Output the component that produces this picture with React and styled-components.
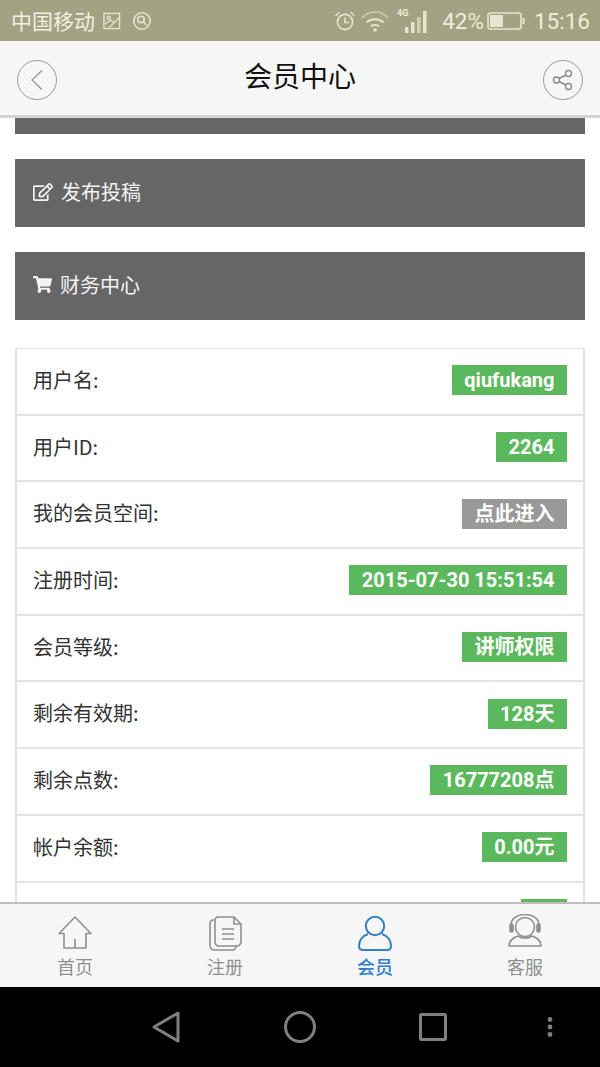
import React from "react";
import styled, { createGlobalStyle } from "styled-components";
import { FaRegEdit, FaShoppingCart } from "react-icons/fa";

const Global = createGlobalStyle`
  html, body { margin: 0; padding: 0; background: #000; }
  body { font-family: Roboto, "Noto Sans CJK SC", sans-serif; }
  * { box-sizing: border-box; }
`;

const Page = styled.div`
  width: 600px;
  height: 1067px;
  display: flex;
  flex-direction: column;
  overflow: hidden;
  background: #fff;
`;

const StatusBar = styled.div`
  height: 41px;
  flex: none;
  background: #a3a283;
  color: #f1f0e2;
  display: flex;
  align-items: center;
  padding: 0 10px 0 11px;
`;
const StatusLeft = styled.div`
  display: flex;
  align-items: center;
  gap: 8px;
  flex: 1;
`;
const Carrier = styled.span`
  font-family: "Noto Sans CJK SC", sans-serif;
  font-size: 21px;
  line-height: 1;
`;
const StatusRight = styled.div`
  display: flex;
  align-items: center;
`;
const StatusText = styled.span`
  font-size: 22.5px;
  line-height: 1;
  margin-top: 1px;
  margin-left: ${(p) => p.$ml || "0"};
  color: #eeedda;
`;

const Header = styled.header`
  height: 77px;
  flex: none;
  background: #f6f6f6;
  border-top: 2px solid #fbfaf3;
  border-bottom: 3px solid #d4d4d4;
  display: flex;
  align-items: center;
  justify-content: space-between;
  padding: 2px 17px 0 17px;
`;
const RoundButton = styled.div`
  width: 40px;
  height: 40px;
  border-radius: 50%;
  border: 1.5px solid #9a9a9a;
  display: flex;
  align-items: center;
  justify-content: center;
`;
const Title = styled.h1`
  margin: 0 0 10px;
  font-family: "Noto Sans CJK SC", sans-serif;
  font-size: 28px;
  font-weight: 400;
  color: #111;
  line-height: 1;
`;

const Content = styled.main`
  flex: 1;
  min-height: 0;
  overflow: hidden;
  padding: 0 15px;
  display: flex;
  flex-direction: column;
`;
const Panel = styled.div`
  flex: none;
  height: ${(p) => p.$h || "68px"};
  margin-bottom: 25px;
  background: #666666;
  color: #f4f4f4;
  display: flex;
  align-items: center;
  padding: 0 0 3px 18px;
  gap: 8px;
`;
const PanelText = styled.span`
  font-family: "Noto Sans CJK SC", sans-serif;
  font-size: 20px;
  margin-bottom: 1px;
`;
const Table = styled.div`
  flex: none;
  margin-top: 3px;
  border: 2px solid #e2e2e2;
  border-top-width: 1px;
  border-bottom: none;
`;
const Row = styled.div`
  height: 66.7px;
  border-bottom: 2px solid #e4e4e4;
  display: flex;
  align-items: center;
  justify-content: space-between;
  padding: 0 16px 2px;
`;
const Label = styled.span`
  font-family: "Noto Sans CJK SC", sans-serif;
  font-size: 20px;
  color: #333;
  margin-bottom: 2px;
`;
const Badge = styled.span`
  height: 30px;
  min-width: ${(p) => p.$minWidth || "0"};
  margin-left: auto;
  padding: 0 12.5px;
  display: flex;
  align-items: center;
  background: ${(p) => (p.$muted ? "#999999" : "#5cb85c")};
  color: #fff;
  font-family: Roboto, "Noto Sans CJK SC", sans-serif;
  font-weight: 700;
  font-size: 20px;
  line-height: 1;
`;

const TabBar = styled.nav`
  height: 85px;
  flex: none;
  background: #f6f6f6;
  border-top: 2px solid #bdbdbd;
  display: grid;
  grid-template-columns: repeat(4, 1fr);
`;
const Tab = styled.div`
  display: flex;
  flex-direction: column;
  align-items: center;
  padding-top: 10px;
  color: ${(p) => (p.$active ? "#2f80c8" : "#8f8f8f")};
`;
const TabIcon = styled.svg`
  width: 40px;
  height: 38px;
  fill: none;
  stroke: currentColor;
  stroke-width: 1.6;
`;
const TabLabel = styled.span`
  font-family: "Noto Sans CJK SC", sans-serif;
  font-size: 18px;
  line-height: 22px;
  margin-top: 3px;
  font-weight: ${(p) => (p.$active ? 500 : 400)};
`;

const NavBar = styled.div`
  height: 80px;
  flex: none;
  background: #000;
  display: flex;
  align-items: center;
  padding-left: 151px;
`;
const NavIcon = styled.svg`
  display: block;
  fill: none;
  stroke: #808080;
  stroke-width: 3;
  flex: none;
  margin-right: ${(p) => p.$mr || "0"};
`;
const NavDots = styled.svg`
  display: block;
  flex: none;
  fill: #808080;
`;

const rows = [
  ["用户名:", "qiufukang"],
  ["用户ID:", "2264"],
  ["我的会员空间:", "点此进入", true],
  ["注册时间:", "2015-07-30 15:51:54"],
  ["会员等级:", "讲师权限"],
  ["剩余有效期:", "128天"],
  ["剩余点数:", "16777208点"],
  ["帐户余额:", "0.00元"],
];

export default function App() {
  return (
    <Page>
      <Global />
      <StatusBar>
        <StatusLeft>
          <Carrier>中国移动</Carrier>
          <svg width="18" height="18" viewBox="0 0 19 19" fill="none" stroke="#e6e5d0" strokeWidth="1.4">
            <rect x="1" y="1.5" width="16.5" height="16" />
            <path d="M1.5 13 L8 8.5 L11 11 M6 17 L17 6" />
            <circle cx="6" cy="6" r="1.6" />
          </svg>
          <svg width="20" height="20" viewBox="0 0 20 20" fill="none" stroke="#e6e5d0" strokeWidth="1.6" style={{ marginLeft: 3 }}>
            <circle cx="10" cy="10" r="8.2" />
            <circle cx="9" cy="8.5" r="3.2" />
            <path d="M11.5 11 L15 14.5" />
          </svg>
        </StatusLeft>
        <StatusRight>
          <svg width="22" height="22" viewBox="0 0 22 22" fill="none" stroke="#e6e5d0" strokeWidth="1.6">
            <circle cx="11" cy="12" r="7.6" />
            <path d="M11 7.5 V12.5 H15 M1.5 6 L5.5 2 M20.5 6 L16.5 2" />
          </svg>
          <svg width="30" height="24" viewBox="0 0 30 24" fill="none" stroke="#c6c5ab" strokeWidth="2" style={{ marginLeft: 4, marginRight: 5 }}>
            <path d="M2 9 C9 1 21 1 28 9" />
            <path d="M6.5 13.5 C11 9 19 9 23.5 13.5" stroke="#e6e5d0" />
            <path d="M11 17.5 C13 15.5 17 15.5 19 17.5" stroke="#e6e5d0" />
            <circle cx="15" cy="21" r="1.8" fill="#e6e5d0" stroke="none" />
          </svg>
          <svg width="34" height="26" viewBox="0 0 34 26" style={{ marginLeft: 1 }}>
            <text x="1" y="8" fontSize="9" fontWeight="700" fontFamily="Roboto" fill="#eeedda">4G</text>
            <g fill="#e6e5d0">
              <rect x="9" y="19" width="3.5" height="6" />
              <rect x="15" y="14" width="3.5" height="11" />
              <rect x="21" y="9" width="3.5" height="16" fill="#d0cfb6" />
              <rect x="27" y="3" width="3.5" height="22" />
            </g>
          </svg>
          <StatusText $ml="12px">42%</StatusText>
          <svg width="38" height="20" viewBox="0 0 38 20" fill="none" style={{ marginLeft: 3, marginTop: 1 }}>
            <rect x="1" y="2" width="33" height="16" rx="2.5" stroke="#e6e5d0" strokeWidth="1.6" />
            <rect x="3" y="4" width="13" height="12" fill="#e6e5d0" />
            <rect x="35.5" y="7" width="2" height="6" fill="#e6e5d0" />
          </svg>
          <StatusText $ml="9px">15:16</StatusText>
        </StatusRight>
      </StatusBar>

      <Header>
        <RoundButton>
          <svg width="14" height="22" viewBox="0 0 14 22" fill="none" stroke="#9a9a9a" strokeWidth="1.4">
            <path d="M12 1.5 L2 11 L12 20.5" />
          </svg>
        </RoundButton>
        <Title>会员中心</Title>
        <RoundButton>
          <svg width="22" height="22" viewBox="0 0 22 22" fill="none" stroke="#8a8a8a" strokeWidth="1.4">
            <circle cx="4.5" cy="11" r="3" />
            <circle cx="16.5" cy="4.5" r="3" />
            <circle cx="16.5" cy="17.5" r="3" />
            <path d="M7 9.5 L14 6 M7 12.5 L14 16" />
          </svg>
        </RoundButton>
      </Header>

      <Content>
        <Panel $h="16px" />
        <Panel>
          <FaRegEdit size={20} />
          <PanelText>发布投稿</PanelText>
        </Panel>
        <Panel>
          <FaShoppingCart size={19} />
          <PanelText>财务中心</PanelText>
        </Panel>
        <Table>
          {rows.map(([label, value, muted]) => (
            <Row key={label}>
              <Label>{label}</Label>
              <Badge $muted={muted}>{value}</Badge>
            </Row>
          ))}
          <Row>
            <Badge $minWidth="46px" />
          </Row>
        </Table>
      </Content>

      <TabBar>
        <Tab>
          <TabIcon viewBox="0 0 40 38">
            <path d="M4 19.5 L20 3 L36 19.5 H31 V34 H9 V19.5 Z" strokeLinejoin="round" />
            <path d="M20 25 V34" />
          </TabIcon>
          <TabLabel>首页</TabLabel>
        </Tab>
        <Tab>
          <TabIcon viewBox="0 0 40 38">
            <path d="M9 6 H8 Q5 6 5 10 V31 Q5 36 10 36 H27 Q31 36 31 32" />
            <path d="M13 3 H29 L36 10 V27 Q36 32 31 32 H14 Q10 32 10 27 V7 Q10 3 13 3 Z" />
            <path d="M29 3 V10 H36 M17 15 H29 M17 20 H29 M17 25 H29" />
          </TabIcon>
          <TabLabel>注册</TabLabel>
        </Tab>
        <Tab $active>
          <TabIcon viewBox="0 0 40 38" style={{ strokeWidth: 2 }}>
            <circle cx="20" cy="12" r="9.2" />
            <path d="M13 20 C7 22 4 27 4 32 Q4 36 8 36 H32 Q36 36 36 32 C36 27 33 22 27 20" />
          </TabIcon>
          <TabLabel $active>会员</TabLabel>
        </Tab>
        <Tab>
          <TabIcon viewBox="0 0 40 38">
            <circle cx="20" cy="13" r="9.5" />
            <path d="M6 15 V11 C6 -3 34 -3 34 11 V15" />
            <rect x="5" y="10" width="3" height="8" rx="1.5" fill="currentColor" />
            <rect x="32" y="10" width="3" height="8" rx="1.5" fill="currentColor" />
            <path d="M13 22 C7 24 4 27 4 32 H36 C36 27 33 24 27 22 C23 25 17 25 13 22 Z" strokeLinejoin="round" />
          </TabIcon>
          <TabLabel>客服</TabLabel>
        </Tab>
      </TabBar>

      <NavBar>
        <NavIcon width="30" height="32" viewBox="0 0 30 32" $mr="103px">
          <path d="M27 2 V30 L3 16 Z" strokeLinejoin="round" />
        </NavIcon>
        <NavIcon width="32" height="32" viewBox="0 0 32 32" $mr="103px">
          <circle cx="16" cy="16" r="14.5" />
        </NavIcon>
        <NavIcon width="28" height="28" viewBox="0 0 28 28" $mr="100px">
          <rect x="1.5" y="1.5" width="25" height="25" rx="1" />
        </NavIcon>
        <NavDots width="6" height="20" viewBox="0 0 6 20">
          <circle cx="3" cy="2.5" r="2.4" />
          <circle cx="3" cy="10" r="2.4" />
          <circle cx="3" cy="17.5" r="2.4" />
        </NavDots>
      </NavBar>
    </Page>
  );
}
